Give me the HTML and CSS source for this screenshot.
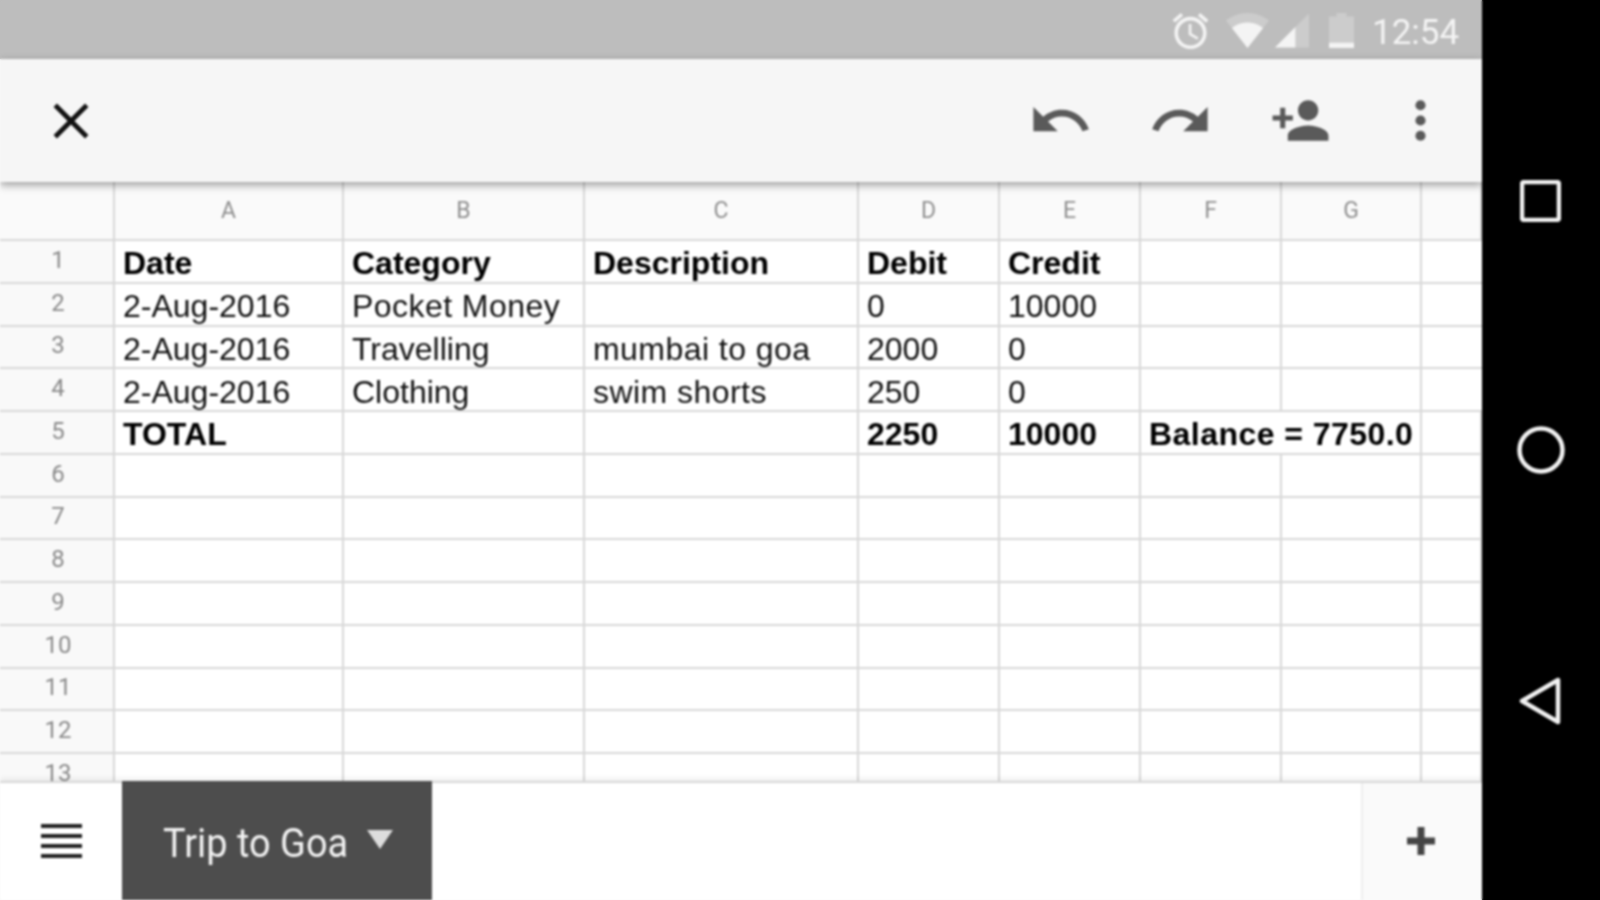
FILE: index.html
```html
<!DOCTYPE html>
<html lang="en">
<head>
<meta charset="utf-8">
<title>Trip to Goa</title>
<link rel="stylesheet" href="styles.css">
</head>
<body>
<div class="screen">
  <div class="main">
    <header class="status">
      <svg class="st-alarm" viewBox="2 1.86 20 20.14"><path d="M22 5.72l-4.6-3.86-1.29 1.53 4.6 3.86L22 5.72zM7.88 3.39L6.6 1.86 2 5.71l1.29 1.53 4.59-3.85zM12.5 8H11v6l4.75 2.85.75-1.23-4-2.37V8zM12 4c-4.97 0-9 4.03-9 9s4.03 9 9 9c4.97 0 9-4.03 9-9s-4.03-9-9-9zm0 16c-3.87 0-7-3.13-7-7s3.13-7 7-7 7 3.13 7 7-3.13 7-7 7z"/></svg>
      <svg class="st-wifi" viewBox="0.36 3 23.28 18.5" preserveAspectRatio="none"><path class="dim" d="M12.01 21.49L23.64 7c-.45-.34-4.93-4-11.64-4C5.28 3 .81 6.66.36 7l11.64 14.49z"/><path d="M3.53 10.95l8.46 10.54.01.01.01-.01 8.46-10.54C20.04 10.62 16.81 8 12 8c-4.81 0-8.04 2.62-8.47 2.95z"/></svg>
      <svg class="st-signal" viewBox="2 2 20 20"><path class="dim" d="M2 22h20V2z"/><path d="M14 10L2 22h12z"/></svg>
      <svg class="st-battery" viewBox="7 2 10 20" preserveAspectRatio="none"><path class="dim" d="M17 4h-3V2h-4v2H7v18h10V4z"/><path d="M7 19h10v3H7z"/></svg>
      <span class="clock">12:54</span>
    </header>

    <div class="toolbar">
      <button class="tool tool-close" type="button" aria-label="Close">
        <svg class="close-icon" viewBox="0 0 35 35"><path d="M3 3l29 29M32 3L3 32"/></svg>
      </button>
      <div class="tool-group">
        <button class="tool" type="button" aria-label="Undo"><svg class="ic-lg" viewBox="0 0 24 24"><path d="M12.5 8c-2.65 0-5.05.99-6.9 2.6L2 7v9h9l-3.62-3.62c1.39-1.16 3.16-1.88 5.12-1.88 3.54 0 6.55 2.31 7.6 5.5l2.37-.78C21.08 11.03 17.15 8 12.5 8z"/></svg></button>
        <button class="tool" type="button" aria-label="Redo"><svg class="ic-lg" viewBox="0 0 24 24"><path d="M18.4 10.6C16.55 8.99 14.15 8 11.5 8c-4.65 0-8.58 3.03-9.96 7.22L3.9 16c1.05-3.19 4.05-5.5 7.6-5.5 1.95 0 3.73.72 5.12 1.88L13 16h9V7l-3.6 3.6z"/></svg></button>
        <button class="tool" type="button" aria-label="Share"><svg class="ic-md" viewBox="0 0 24 24"><path d="M15 12c2.21 0 4-1.79 4-4s-1.79-4-4-4-4 1.79-4 4 1.79 4 4 4zm-9-2V7H4v3H1v2h3v3h2v-3h3v-2H6zm9 4c-2.67 0-8 1.34-8 4v2h16v-2c0-2.66-5.33-4-8-4z"/></svg></button>
        <button class="tool" type="button" aria-label="More"><svg class="ic-md" viewBox="0 0 24 24"><circle cx="12" cy="6" r="2"/><circle cx="12" cy="12" r="2"/><circle cx="12" cy="18" r="2"/></svg></button>
      </div>
    </div>

    <div class="sheet">
      <div class="corner"></div><div class="colh">A</div><div class="colh">B</div><div class="colh">C</div><div class="colh">D</div><div class="colh">E</div><div class="colh">F</div><div class="colh">G</div><div class="colh"></div>

      <div class="rowh">1</div><div class="c b">Date</div><div class="c b">Category</div><div class="c b">Description</div><div class="c b">Debit</div><div class="c b">Credit</div><div class="c"></div><div class="c"></div><div class="c"></div>
      <div class="rowh">2</div><div class="c">2-Aug-2016</div><div class="c w">Pocket Money</div><div class="c"></div><div class="c">0</div><div class="c">10000</div><div class="c"></div><div class="c"></div><div class="c"></div>
      <div class="rowh">3</div><div class="c">2-Aug-2016</div><div class="c">Travelling</div><div class="c w">mumbai to goa</div><div class="c">2000</div><div class="c">0</div><div class="c"></div><div class="c"></div><div class="c"></div>
      <div class="rowh">4</div><div class="c">2-Aug-2016</div><div class="c">Clothing</div><div class="c w">swim shorts</div><div class="c">250</div><div class="c">0</div><div class="c"></div><div class="c"></div><div class="c"></div>
      <div class="rowh">5</div><div class="c b">TOTAL</div><div class="c"></div><div class="c"></div><div class="c b">2250</div><div class="c b">10000</div><div class="c b w span2">Balance = 7750.0</div><div class="c"></div>
      <div class="rowh">6</div><div class="c"></div><div class="c"></div><div class="c"></div><div class="c"></div><div class="c"></div><div class="c"></div><div class="c"></div><div class="c"></div>
      <div class="rowh">7</div><div class="c"></div><div class="c"></div><div class="c"></div><div class="c"></div><div class="c"></div><div class="c"></div><div class="c"></div><div class="c"></div>
      <div class="rowh">8</div><div class="c"></div><div class="c"></div><div class="c"></div><div class="c"></div><div class="c"></div><div class="c"></div><div class="c"></div><div class="c"></div>
      <div class="rowh">9</div><div class="c"></div><div class="c"></div><div class="c"></div><div class="c"></div><div class="c"></div><div class="c"></div><div class="c"></div><div class="c"></div>
      <div class="rowh">10</div><div class="c"></div><div class="c"></div><div class="c"></div><div class="c"></div><div class="c"></div><div class="c"></div><div class="c"></div><div class="c"></div>
      <div class="rowh">11</div><div class="c"></div><div class="c"></div><div class="c"></div><div class="c"></div><div class="c"></div><div class="c"></div><div class="c"></div><div class="c"></div>
      <div class="rowh">12</div><div class="c"></div><div class="c"></div><div class="c"></div><div class="c"></div><div class="c"></div><div class="c"></div><div class="c"></div><div class="c"></div>
      <div class="rowh">13</div><div class="c"></div><div class="c"></div><div class="c"></div><div class="c"></div><div class="c"></div><div class="c"></div><div class="c"></div><div class="c"></div>
    </div>

    <footer class="tabs">
      <button class="menu" type="button" aria-label="Sheets"><span class="bars"><i></i><i></i><i></i><i></i></span></button>
      <div class="tab"><span class="tab-name">Trip to Goa</span><svg class="tab-arrow" viewBox="0 0 26 19"><path d="M0 0h26L13 19z"/></svg></div>
      <div class="tabs-space"></div>
      <button class="add" type="button" aria-label="Add sheet"><svg class="add-icon" viewBox="0 0 28 28"><path d="M14 0v28M0 14h28"/></svg></button>
    </footer>
  </div>

  <nav class="nav">
    <svg class="nav-square" viewBox="0 0 41 42"><rect x="2" y="2" width="37" height="38" rx="2"/></svg>
    <svg class="nav-circle" viewBox="0 0 48 48"><circle cx="24" cy="24" r="21.5"/></svg>
    <svg class="nav-back" viewBox="0 0 42 48"><path d="M39 3v42L3 24z"/></svg>
  </nav>
</div>
</body>
</html>
```

FILE: styles.css
```css
* { box-sizing: border-box; }
html {
  background:
    linear-gradient(to right, transparent 1482px, #000 1482px),
    linear-gradient(#bdbdbd 59px, #f8f8f8 59px);
}
body { margin: 0; padding: 0; }
button { border: 0; padding: 0; background: none; font: inherit; }

.screen {
  display: flex;
  width: 1600px;
  height: 900px;
  overflow: hidden;
  filter: blur(0.8px);
  font-family: "Liberation Sans", Arial, sans-serif;
}
.main { display: flex; flex-direction: column; width: 1482px; height: 900px; background: #fff; }

/* status bar */
.status {
  display: flex;
  align-items: center;
  justify-content: flex-end;
  flex: none;
  height: 59px;
  padding: 2px 19px 0 0;
  background: #bdbdbd;
}
.status svg { display: block; fill: #f4f4f4; }
.status .dim { opacity: .28; }
.st-alarm { width: 37px; height: 36px; margin-right: 17px; }
.st-wifi { width: 43px; height: 35px; margin-right: 6px; }
.st-signal { width: 34px; height: 35px; margin-right: 20px; }
.st-battery { width: 25px; height: 35px; margin-right: 18px; }
.clock { margin-top: 3px; font: 400 35px/1 Roboto, sans-serif; color: #f4f4f4; width: 91px; white-space: nowrap; }

/* toolbar */
.toolbar {
  position: relative;
  z-index: 2;
  display: flex;
  align-items: center;
  justify-content: space-between;
  flex: none;
  height: 123px;
  background: #f6f6f6;
  box-shadow: 0 3px 8px rgba(0, 0, 0, .38);
}
.tool-group { display: flex; align-items: center; margin-right: 2px; }
.tool { display: flex; align-items: center; justify-content: center; width: 120px; height: 120px; }
.tool-close { width: 141px; }
.tool svg { display: block; fill: #5a5a5a; }
.close-icon { width: 38px; height: 38px; }
.tool .close-icon { fill: none; stroke: #111; stroke-width: 4.4; }
.ic-lg { width: 65px; height: 65px; }
.ic-md { width: 61px; height: 61px; }

/* sheet grid */
.sheet {
  flex: 1;
  min-height: 0;
  overflow: hidden;
  display: grid;
  grid-template-columns: 115px 229px 241px 274px 141px 141px 141px 140px 60px;
  grid-template-rows: 59px;
  grid-auto-rows: 42.75px;
  background: #fff;
}
.corner, .colh, .rowh, .c {
  border-right: 2px solid #d8d8d8;
  border-bottom: 2px solid #d8d8d8;
}
.corner, .colh { background: #fafafa; }
.colh {
  display: flex;
  align-items: center;
  justify-content: center;
  font: 400 23px/1 Roboto, sans-serif;
  color: #8f8f8f;
}
.colh:last-child { border-right: 0; }
.rowh {
  display: flex;
  align-items: center;
  justify-content: center;
  padding-bottom: 3px;
  padding-left: 3px;
  background: #f9f9f9;
  font: 400 24px/1 Roboto, sans-serif;
  color: #8a8a8a;
}
.c {
  display: flex;
  align-items: center;
  padding: 4px 0 0 8px;
  font-size: 32px;
  line-height: 1;
  color: #111;
  white-space: nowrap;
  overflow: hidden;
}
.c:nth-child(9n) { border-right: 0; }
.b { font-weight: 700; color: #000; }
.w { letter-spacing: .45px; }
.span2 { grid-column: span 2; }

/* bottom tabs */
.tabs {
  position: relative;
  z-index: 2;
  display: flex;
  flex: none;
  height: 119px;
  background: #fff;
  border-top: 2px solid #d8d8d8;
  box-shadow: 0 -2px 6px rgba(0, 0, 0, .08);
}
.menu { display: flex; align-items: center; justify-content: center; width: 122px; margin-top: -2px; }
.bars { display: flex; flex-direction: column; gap: 6px; width: 41px; }
.bars i { display: block; height: 4px; background: #222; }
.tab {
  display: flex;
  align-items: center;
  width: 310px;
  margin-top: -2px;
  padding-left: 41px;
  background: #4d4d4d;
}
.tab-name {
  display: inline-block;
  width: 208px;
  margin-top: 5px;
  font: 400 41px/1 Roboto, sans-serif;
  color: #f2f2f2;
  white-space: nowrap;
  transform: scaleX(.925);
  transform-origin: left center;
}
.tab-arrow { display: block; width: 26px; height: 19px; margin: -2px 0 0 -4px; fill: #ddd; }
.tabs-space { flex: 1; }
.add {
  display: flex;
  align-items: center;
  justify-content: center;
  width: 121px;
  padding: 0 4px 2px 0;
  background: #fafafa;
  border-left: 2px solid #eee;
}
.add-icon { display: block; width: 28px; height: 28px; fill: none; stroke: #444; stroke-width: 7; }

/* android nav */
.nav {
  display: flex;
  flex-direction: column;
  align-items: center;
  width: 118px;
  height: 900px;
  padding-top: 180px;
  background: #000;
}
.nav svg { display: block; fill: none; stroke: #f2f2f2; stroke-width: 4.5; }
.nav-square { width: 41px; height: 42px; margin: 0 2px 204px 0; }
.nav-circle { width: 48px; height: 48px; margin-bottom: 203px; }
.nav-back { width: 42px; height: 48px; margin-right: 2px; stroke-linejoin: round; }
```
